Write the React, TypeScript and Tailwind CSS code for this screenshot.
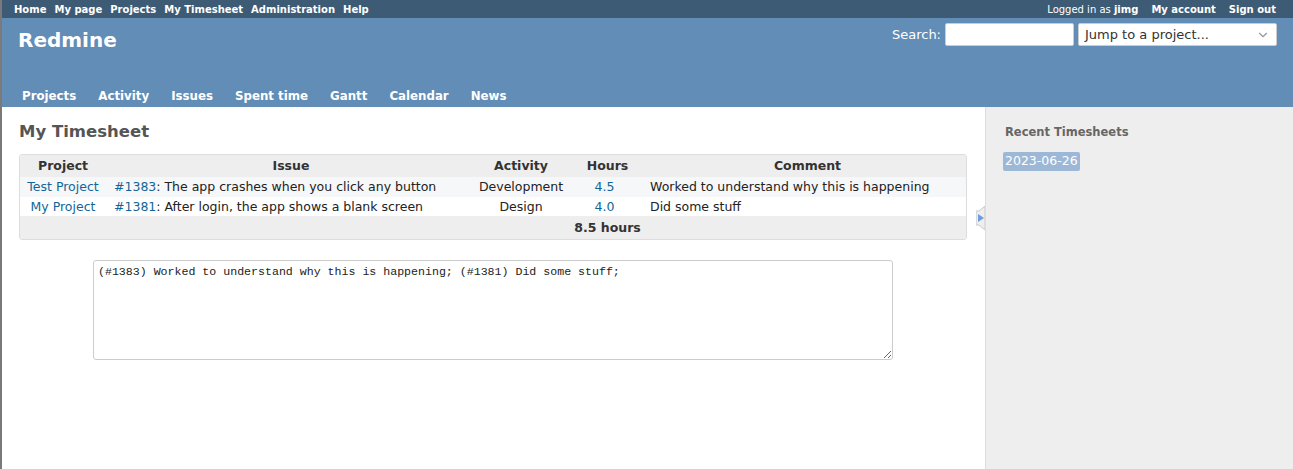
import { ChevronDown } from "lucide-react";

const topLinks = ["Home", "My page", "Projects", "My Timesheet", "Administration", "Help"];
const mainMenu = ["Projects", "Activity", "Issues", "Spent time", "Gantt", "Calendar", "News"];

const entries = [
  {
    project: "Test Project",
    issue: "#1383",
    subject: "The app crashes when you click any button",
    activity: "Development",
    hours: "4.5",
    comment: "Worked to understand why this is happening",
  },
  {
    project: "My Project",
    issue: "#1381",
    subject: "After login, the app shows a blank screen",
    activity: "Design",
    hours: "4.0",
    comment: "Did some stuff",
  },
];

function SidebarToggle() {
  return (
    <svg width="9" height="24" viewBox="0 0 9 24" className="absolute right-0 top-[99px]">
      <path d="M9 0 L3 5 L0 5 L0 19 L3 19 L9 24 Z" fill="#eeeeee" stroke="#c8c8c8" strokeWidth="1" />
      <path d="M2 8 L8 12 L2 16 Z" fill="#6f9be0" />
    </svg>
  );
}

export default function App() {
  return (
    <div className="flex min-h-[469px] flex-col border-l-2 border-[#7a7a7a] font-['DejaVu_Sans',Verdana,sans-serif]">
      <div className="flex h-[18px] items-center justify-between bg-[#3e5b76] pl-[12px] pr-[17px] text-[10px] font-bold text-white">
        <div className="flex gap-[8px]">
          {topLinks.map((link) => (
            <span key={link}>{link}</span>
          ))}
        </div>
        <div className="flex gap-[13px]">
          <span className="font-normal">
            Logged in as <span className="font-bold">jimg</span>
          </span>
          <span>My account</span>
          <span>Sign out</span>
        </div>
      </div>

      <header className="relative h-[89px] bg-[#628db6] text-white">
        <h1 className="absolute left-[16px] top-[7px] text-[20px] font-bold">Redmine</h1>
        <div className="absolute right-[16px] top-[5px] flex items-center gap-[4px] text-[13px]">
          <label>Search:</label>
          <input className="h-[23px] w-[129px] rounded-[2px] border border-[#ccc] bg-white" />
          <div className="flex h-[23px] w-[199px] items-center justify-between rounded-[2px] border border-[#ccc] bg-white pl-[6px] pr-[6px] text-[13px] text-[#333]">
            <span>Jump to a project...</span>
            <ChevronDown size={14} strokeWidth={2} className="text-[#999]" />
          </div>
        </div>
        <nav className="absolute bottom-[0px] left-[10px] flex gap-[2px] text-[11.8px] font-bold">
          {mainMenu.map((item) => (
            <span key={item} className="px-[10px] pb-[1px] pt-[7px]">
              {item}
            </span>
          ))}
        </nav>
      </header>

      <div className="flex flex-1">
        <main className="relative flex-1 pl-[17px] pr-[18px] pt-[13px]">
          <h2 className="text-[16.5px] font-bold text-[#555]">My Timesheet</h2>
          <div className="mt-[9px] overflow-hidden rounded-[3px] border border-[#ddd]">
            <table className="w-full border-collapse text-[12.5px] text-[#222]">
              <thead>
                <tr className="h-[22px] bg-[#eee] text-[#333]">
                  <th className="w-[86px] pt-[2px] font-bold">Project</th>
                  <th className="w-[370px] pt-[2px] font-bold">Issue</th>
                  <th className="w-[90px] pt-[2px] font-bold">Activity</th>
                  <th className="w-[83px] pt-[2px] font-bold">Hours</th>
                  <th className="pt-[2px] font-bold">Comment</th>
                </tr>
              </thead>
              <tbody>
                {entries.map((entry, index) => (
                  <tr key={entry.issue} className={index === 0 ? "h-[19px] bg-[#f6f7f8]" : "h-[19px] bg-white"}>
                    <td className="pt-[1px] text-center text-[#169]">{entry.project}</td>
                    <td className="pl-[8px] pt-[1px]">
                      <span className="text-[#169]">{entry.issue}</span>: {entry.subject}
                    </td>
                    <td className="pt-[1px] text-center">{entry.activity}</td>
                    <td className="pr-[6px] pt-[1px] text-center text-[#169]">{entry.hours}</td>
                    <td className="pl-[1px] pt-[1px]">{entry.comment}</td>
                  </tr>
                ))}
                <tr className="h-[23px] bg-[#eee]">
                  <td colSpan={3} />
                  <td className="whitespace-nowrap pt-[1px] text-center font-bold text-[#333]">8.5 hours</td>
                  <td />
                </tr>
              </tbody>
            </table>
          </div>

          <div className="mt-[20px] pl-[74px]">
            <textarea
              readOnly
              className="h-[100px] w-[800px] rounded-[3px] border border-[#ccc] px-[4px] py-[2px] font-['Liberation_Mono',monospace] text-[11.6px] text-[#222] outline-none"
              defaultValue="(#1383) Worked to understand why this is happening; (#1381) Did some stuff;"
            />
          </div>
          <SidebarToggle />
        </main>

        <aside className="w-[308px] border-l border-[#ddd] bg-[#eee] pl-[19px] pt-[17px]">
          <h3 className="text-[11.5px] font-bold text-[#666]">Recent Timesheets</h3>
          <span className="ml-[-2px] mt-[11px] inline-block rounded-[2px] bg-[#9db8d6] px-[2px] text-[12.5px] text-white">
            2023-06-26
          </span>
        </aside>
      </div>
    </div>
  );
}
